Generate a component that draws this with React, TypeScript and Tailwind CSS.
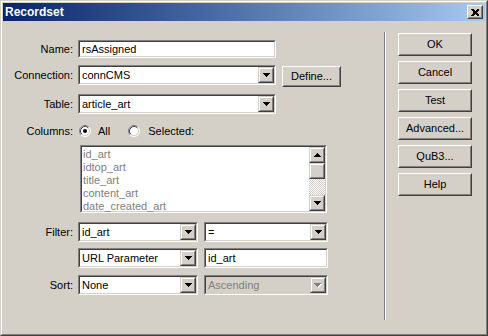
import type { ReactNode } from 'react';

// Classic Win2000 bevels
function Sunken({ className = '', inner = 'bg-white', children }: { className?: string; inner?: string; children?: ReactNode }) {
  return (
    <div className={`border border-t-[#808080] border-l-[#808080] border-b-white border-r-white ${className}`}>
      <div className={`flex h-full w-full border border-t-[#404040] border-l-[#404040] border-b-[#d4d0c8] border-r-[#d4d0c8] ${inner}`}>
        {children}
      </div>
    </div>
  );
}

function Raised({ className = '', children }: { className?: string; children?: ReactNode }) {
  return (
    <div className={`border border-t-white border-l-white border-b-[#404040] border-r-[#404040] bg-[#d4d0c8] ${className}`}>
      <div className="flex h-full w-full items-center justify-center border border-t-[#d4d0c8] border-l-[#d4d0c8] border-b-[#808080] border-r-[#808080]">
        {children}
      </div>
    </div>
  );
}

function Arrow({ up = false, color = '#000000' }: { up?: boolean; color?: string }) {
  return (
    <svg width="7" height="4" viewBox="0 0 7 4" shapeRendering="crispEdges" className={up ? 'rotate-180' : ''}>
      <rect x="0" y="0" width="7" height="1" fill={color} />
      <rect x="1" y="1" width="5" height="1" fill={color} />
      <rect x="2" y="2" width="3" height="1" fill={color} />
      <rect x="3" y="3" width="1" height="1" fill={color} />
    </svg>
  );
}

function BoxBtn({ children }: { children?: ReactNode }) {
  return (
    <div className="h-[16px] w-[16px] shrink-0 border border-t-[#d4d0c8] border-l-[#d4d0c8] border-b-[#404040] border-r-[#404040] bg-[#d4d0c8]">
      <div className="flex h-full w-full items-center justify-center border border-t-white border-l-white border-b-[#808080] border-r-[#808080]">
        {children}
      </div>
    </div>
  );
}

function Select({ value, width, disabled = false }: { value: string; width: string; disabled?: boolean }) {
  return (
    <Sunken className={`h-[20px] ${width}`} inner={disabled ? 'bg-[#d4d0c8]' : 'bg-white'}>
      <span className={`flex-1 pl-[2px] leading-[16px] ${disabled ? 'text-[#808080]' : 'text-black'}`}>{value}</span>
      <BoxBtn>
        {disabled ? (
          <div className="relative h-[5px] w-[8px]">
            <div className="absolute left-[1px] top-[1px]"><Arrow color="#ffffff" /></div>
            <div className="absolute left-0 top-0"><Arrow color="#808080" /></div>
          </div>
        ) : (
          <Arrow />
        )}
      </BoxBtn>
    </Sunken>
  );
}

function Radio({ checked }: { checked: boolean }) {
  return (
    <svg width="12" height="12" viewBox="0 0 12 12">
      <circle cx="6" cy="6" r="5" fill="#ffffff" />
      <path d="M9.89 2.11 A5.5 5.5 0 0 0 2.11 9.89" fill="none" stroke="#808080" />
      <path d="M9.89 2.11 A5.5 5.5 0 0 1 2.11 9.89" fill="none" stroke="#ffffff" />
      <path d="M9.18 2.82 A4.5 4.5 0 0 0 2.82 9.18" fill="none" stroke="#404040" />
      <path d="M9.18 2.82 A4.5 4.5 0 0 1 2.82 9.18" fill="none" stroke="#d4d0c8" />
      {checked && <circle cx="6" cy="6" r="2" fill="#000000" />}
    </svg>
  );
}

function Label({ text, h = 'h-[20px]' }: { text: string; h?: string }) {
  return <div className={`flex w-[70px] shrink-0 items-center justify-end ${h}`}>{text}</div>;
}

const COLUMNS = ['id_art', 'idtop_art', 'title_art', 'content_art', 'date_created_art'];
const BUTTONS = ['OK', 'Cancel', 'Test', 'Advanced...', 'QuB3...', 'Help'];

export default function App() {
  return (
    <div className="h-[336px] w-[488px] font-['Liberation_Sans',Arial,sans-serif] text-[11px] text-black">
      <div className="h-full w-full border border-t-[#d4d0c8] border-l-[#d4d0c8] border-b-[#404040] border-r-[#404040]">
        <div className="flex h-full w-full flex-col border border-t-white border-l-white border-b-[#808080] border-r-[#808080] bg-[#d4d0c8] p-px">
          {/* Title bar */}
          <div className="flex h-[18px] shrink-0 items-center bg-linear-to-r from-[#0a246a] to-[#a6caf0] pl-[2px] pr-[2px]">
            <span className="flex-1 text-[12px] font-bold text-white">Recordset</span>
            <Raised className="h-[14px] w-[16px]">
              <svg width="8" height="7" viewBox="0 0 8 7" shapeRendering="crispEdges">
                <path d="M0 0h2l2 2 2-2h2v1l-2 2v1l2 2v1h-2l-2-2-2 2h-2v-1l2-2v-1l-2-2z" fill="#000000" />
              </svg>
            </Raised>
          </div>

          <div className="flex flex-1">
            {/* Form */}
            <div className="flex w-[381px] flex-col">
              <div className="mt-[19px] flex gap-[5px]">
                <Label text="Name:" h="h-[18px]" />
                <Sunken className="h-[18px] w-[198px]">
                  <span className="pl-[2px] leading-[14px]">rsAssigned</span>
                </Sunken>
              </div>

              <div className="mt-[7px] flex items-start gap-[5px]">
                <Label text="Connection:" />
                <Select value="connCMS" width="w-[198px]" />
                <Raised className="ml-px mt-px h-[21px] w-[59px]">Define...</Raised>
              </div>

              <div className="mt-[7px] flex gap-[5px]">
                <Label text="Table:" />
                <Select value="article_art" width="w-[198px]" />
              </div>

              <div className="mt-[10px] flex h-[14px] items-center">
                <Label text="Columns:" h="h-[14px]" />
                <div className="ml-[6px] flex items-center">
                  <Radio checked />
                  <span className="ml-[7px]">All</span>
                  <div className="ml-[18px]"><Radio checked={false} /></div>
                  <span className="ml-[8px]">Selected:</span>
                </div>
              </div>

              <Sunken className="ml-[77px] mt-[7px] h-[68px] w-[247px]">
                <div className="flex flex-1 flex-col pl-px pt-px text-[#808080]">
                  {COLUMNS.map((c) => (
                    <div key={c} className="h-[13px] leading-[13px]">{c}</div>
                  ))}
                </div>
                <div className="flex w-[16px] flex-col">
                  <BoxBtn><Arrow up /></BoxBtn>
                  <BoxBtn />
                  <div className="flex-1 bg-[image:repeating-conic-gradient(#ffffff_0%_25%,#d4d0c8_0%_50%)] bg-[length:2px_2px]" />
                  <BoxBtn><Arrow /></BoxBtn>
                </div>
              </Sunken>

              <div className="mt-[9px] flex gap-[5px]">
                <Label text="Filter:" />
                <Select value="id_art" width="w-[120px]" />
                <div className="ml-px"><Select value="=" width="w-[124px]" /></div>
              </div>

              <div className="mt-[6px] flex gap-[5px]">
                <div className="w-[70px] shrink-0" />
                <Select value="URL Parameter" width="w-[120px]" />
                <Sunken className="ml-px h-[20px] w-[124px]">
                  <span className="pl-[2px] leading-[16px]">id_art</span>
                </Sunken>
              </div>

              <div className="mt-[7px] flex gap-[5px]">
                <Label text="Sort:" />
                <Select value="None" width="w-[120px]" />
                <div className="ml-px"><Select value="Ascending" width="w-[124px]" disabled /></div>
              </div>
            </div>

            {/* Separator */}
            <div className="mt-[11px] h-[288px] w-[2px] border-l border-r border-l-[#808080] border-r-white" />

            {/* Buttons */}
            <div className="ml-[12px] mt-[12px] flex w-[74px] flex-col gap-[5px]">
              {BUTTONS.map((b) => (
                <Raised key={b} className="h-[23px] w-[74px]">{b}</Raised>
              ))}
            </div>
          </div>
        </div>
      </div>
    </div>
  );
}
